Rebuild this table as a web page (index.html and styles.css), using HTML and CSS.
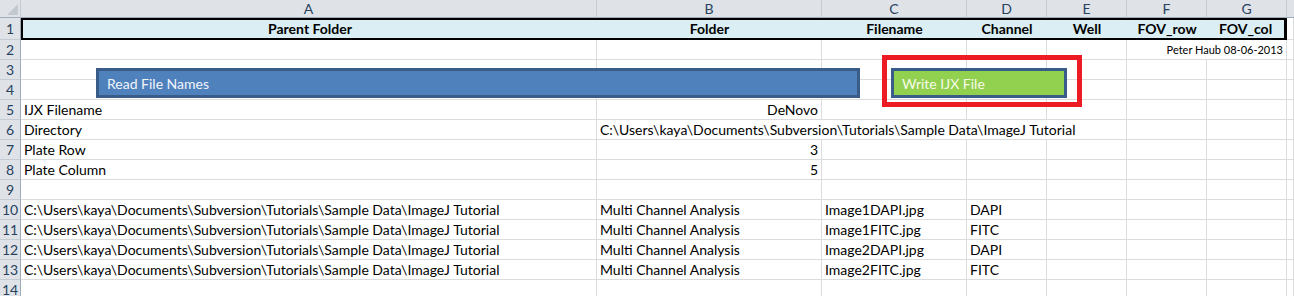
FILE: index.html
```html
<!DOCTYPE html>
<html>
<head>
<meta charset="utf-8">
<link rel="stylesheet" href="styles.css">
</head>
<body>
<div class="sheet">
  <div class="grid">
    <!-- column headers -->
    <div class="ch corner"><span class="tri"></span></div>
    <div class="ch">A</div><div class="ch">B</div><div class="ch">C</div><div class="ch">D</div>
    <div class="ch">E</div><div class="ch">F</div><div class="ch">G</div><div class="ch last"></div>

    <!-- row 1 -->
    <div class="rh">1</div>
    <div class="c h1 h1first">Parent Folder</div>
    <div class="c h1">Folder</div>
    <div class="c h1">Filename</div>
    <div class="c h1">Channel</div>
    <div class="c h1">Well</div>
    <div class="c h1">FOV_row</div>
    <div class="c h1 h1last">FOV_col</div>
    <div class="c"></div>

    <!-- row 2 -->
    <div class="rh">2</div>
    <div class="c"></div><div class="c"></div><div class="c"></div><div class="c"></div><div class="c"></div>
    <div class="c span2 right small">Peter Haub 08-06-2013</div>
    <div class="c"></div>

    <!-- row 3 -->
    <div class="rh">3</div>
    <div class="c"></div><div class="c"></div><div class="c"></div><div class="c"></div><div class="c"></div><div class="c"></div><div class="c"></div><div class="c"></div>

    <!-- row 4 -->
    <div class="rh">4</div>
    <div class="c"></div><div class="c"></div><div class="c"></div><div class="c"></div><div class="c"></div><div class="c"></div><div class="c"></div><div class="c"></div>

    <!-- row 5 -->
    <div class="rh">5</div>
    <div class="c">IJX Filename</div>
    <div class="c right">DeNovo</div>
    <div class="c"></div><div class="c"></div><div class="c"></div><div class="c"></div><div class="c"></div><div class="c"></div>

    <!-- row 6 -->
    <div class="rh">6</div>
    <div class="c">Directory</div>
    <div class="c span4">C:\Users\kaya\Documents\Subversion\Tutorials\Sample Data\ImageJ Tutorial</div>
    <div class="c"></div><div class="c"></div><div class="c"></div>

    <!-- row 7 -->
    <div class="rh">7</div>
    <div class="c">Plate Row</div>
    <div class="c right">3</div>
    <div class="c"></div><div class="c"></div><div class="c"></div><div class="c"></div><div class="c"></div><div class="c"></div>

    <!-- row 8 -->
    <div class="rh">8</div>
    <div class="c">Plate Column</div>
    <div class="c right">5</div>
    <div class="c"></div><div class="c"></div><div class="c"></div><div class="c"></div><div class="c"></div><div class="c"></div>

    <!-- row 9 -->
    <div class="rh">9</div>
    <div class="c"></div><div class="c"></div><div class="c"></div><div class="c"></div><div class="c"></div><div class="c"></div><div class="c"></div><div class="c"></div>

    <!-- row 10 -->
    <div class="rh">10</div>
    <div class="c">C:\Users\kaya\Documents\Subversion\Tutorials\Sample Data\ImageJ Tutorial</div>
    <div class="c">Multi Channel Analysis</div>
    <div class="c">Image1DAPI.jpg</div>
    <div class="c">DAPI</div>
    <div class="c"></div><div class="c"></div><div class="c"></div><div class="c"></div>

    <!-- row 11 -->
    <div class="rh">11</div>
    <div class="c">C:\Users\kaya\Documents\Subversion\Tutorials\Sample Data\ImageJ Tutorial</div>
    <div class="c">Multi Channel Analysis</div>
    <div class="c">Image1FITC.jpg</div>
    <div class="c">FITC</div>
    <div class="c"></div><div class="c"></div><div class="c"></div><div class="c"></div>

    <!-- row 12 -->
    <div class="rh">12</div>
    <div class="c">C:\Users\kaya\Documents\Subversion\Tutorials\Sample Data\ImageJ Tutorial</div>
    <div class="c">Multi Channel Analysis</div>
    <div class="c">Image2DAPI.jpg</div>
    <div class="c">DAPI</div>
    <div class="c"></div><div class="c"></div><div class="c"></div><div class="c"></div>

    <!-- row 13 -->
    <div class="rh">13</div>
    <div class="c">C:\Users\kaya\Documents\Subversion\Tutorials\Sample Data\ImageJ Tutorial</div>
    <div class="c">Multi Channel Analysis</div>
    <div class="c">Image2FITC.jpg</div>
    <div class="c">FITC</div>
    <div class="c"></div><div class="c"></div><div class="c"></div><div class="c"></div>

    <!-- row 14 -->
    <div class="rh">14</div>
    <div class="c"></div><div class="c"></div><div class="c"></div><div class="c"></div><div class="c"></div><div class="c"></div><div class="c"></div><div class="c"></div>
  </div>

  <div class="btn btn-read">Read File Names</div>
  <div class="highlight"></div>
  <div class="btn btn-write">Write IJX File</div>
</div>
</body>
</html>
```

FILE: styles.css
```css
* { box-sizing: border-box; }

html, body {
  margin: 0;
  padding: 0;
  background: #ffffff;
  overflow: hidden;
}

body {
  font-family: Lato, "Liberation Sans", sans-serif;
  font-size: 14px;
  color: #000;
}

.sheet {
  position: relative;
  width: 1294px;
  height: 296px;
  overflow: hidden;
}

.grid {
  display: grid;
  grid-template-columns: 21px 576px 225px 145px 80px 80px 80px 80px 7px;
  grid-template-rows: 18px 22px repeat(13, 20px);
}

.ch {
  background: #dfe3e8;
  color: #27415f;
  border-right: 1px solid #c5cbd3;
  border-bottom: 1px solid #9eabb9;
  display: flex;
  align-items: center;
  justify-content: center;
  font-size: 14px;
  line-height: 1;
  padding-top: 1px;
}

.ch.last { border-right: none; }

.corner { position: relative; }

.tri {
  position: absolute;
  right: 2px;
  bottom: 2px;
  width: 0;
  height: 0;
  border-left: 11px solid transparent;
  border-bottom: 11px solid #c3c9d0;
}

.rh {
  background: #dfe3e8;
  color: #27415f;
  border-right: 1px solid #9eabb9;
  border-bottom: 1px solid #c5cbd3;
  display: flex;
  align-items: center;
  justify-content: center;
  font-size: 14px;
  line-height: 1;
}

.c {
  border-right: 1px solid #dadcdd;
  border-bottom: 1px solid #dadcdd;
  white-space: nowrap;
  overflow: visible;
  padding: 0 3px;
  display: flex;
  align-items: center;
  line-height: 1;
}

.right { justify-content: flex-end; }

.span2 { grid-column: span 2; }
.span4 { grid-column: span 4; }

.small {
  font-size: 11px;
  padding-right: 3px;
}

.h1 {
  background: #daeef3;
  border-top: 2px solid #000;
  border-bottom: 2px solid #000;
  border-right: none;
  justify-content: center;
  font-weight: bold;
}

.h1first { border-left: 2px solid #000; }
.h1last { border-right: 3px solid #000; }

.btn {
  position: absolute;
  top: 68px;
  height: 30px;
  border: 3px solid #3a5c89;
  display: flex;
  align-items: center;
  padding-left: 8px;
  font-size: 14px;
  color: #f2f5fa;
}

.btn-read {
  left: 96px;
  width: 764px;
  background: #4f81bd;
}

.btn-write {
  left: 891px;
  width: 176px;
  background: #92d050;
  color: #f8fbe8;
}

.highlight {
  position: absolute;
  left: 882px;
  top: 55px;
  width: 200px;
  height: 52px;
  border: 5px solid #ed1c24;
}
```
